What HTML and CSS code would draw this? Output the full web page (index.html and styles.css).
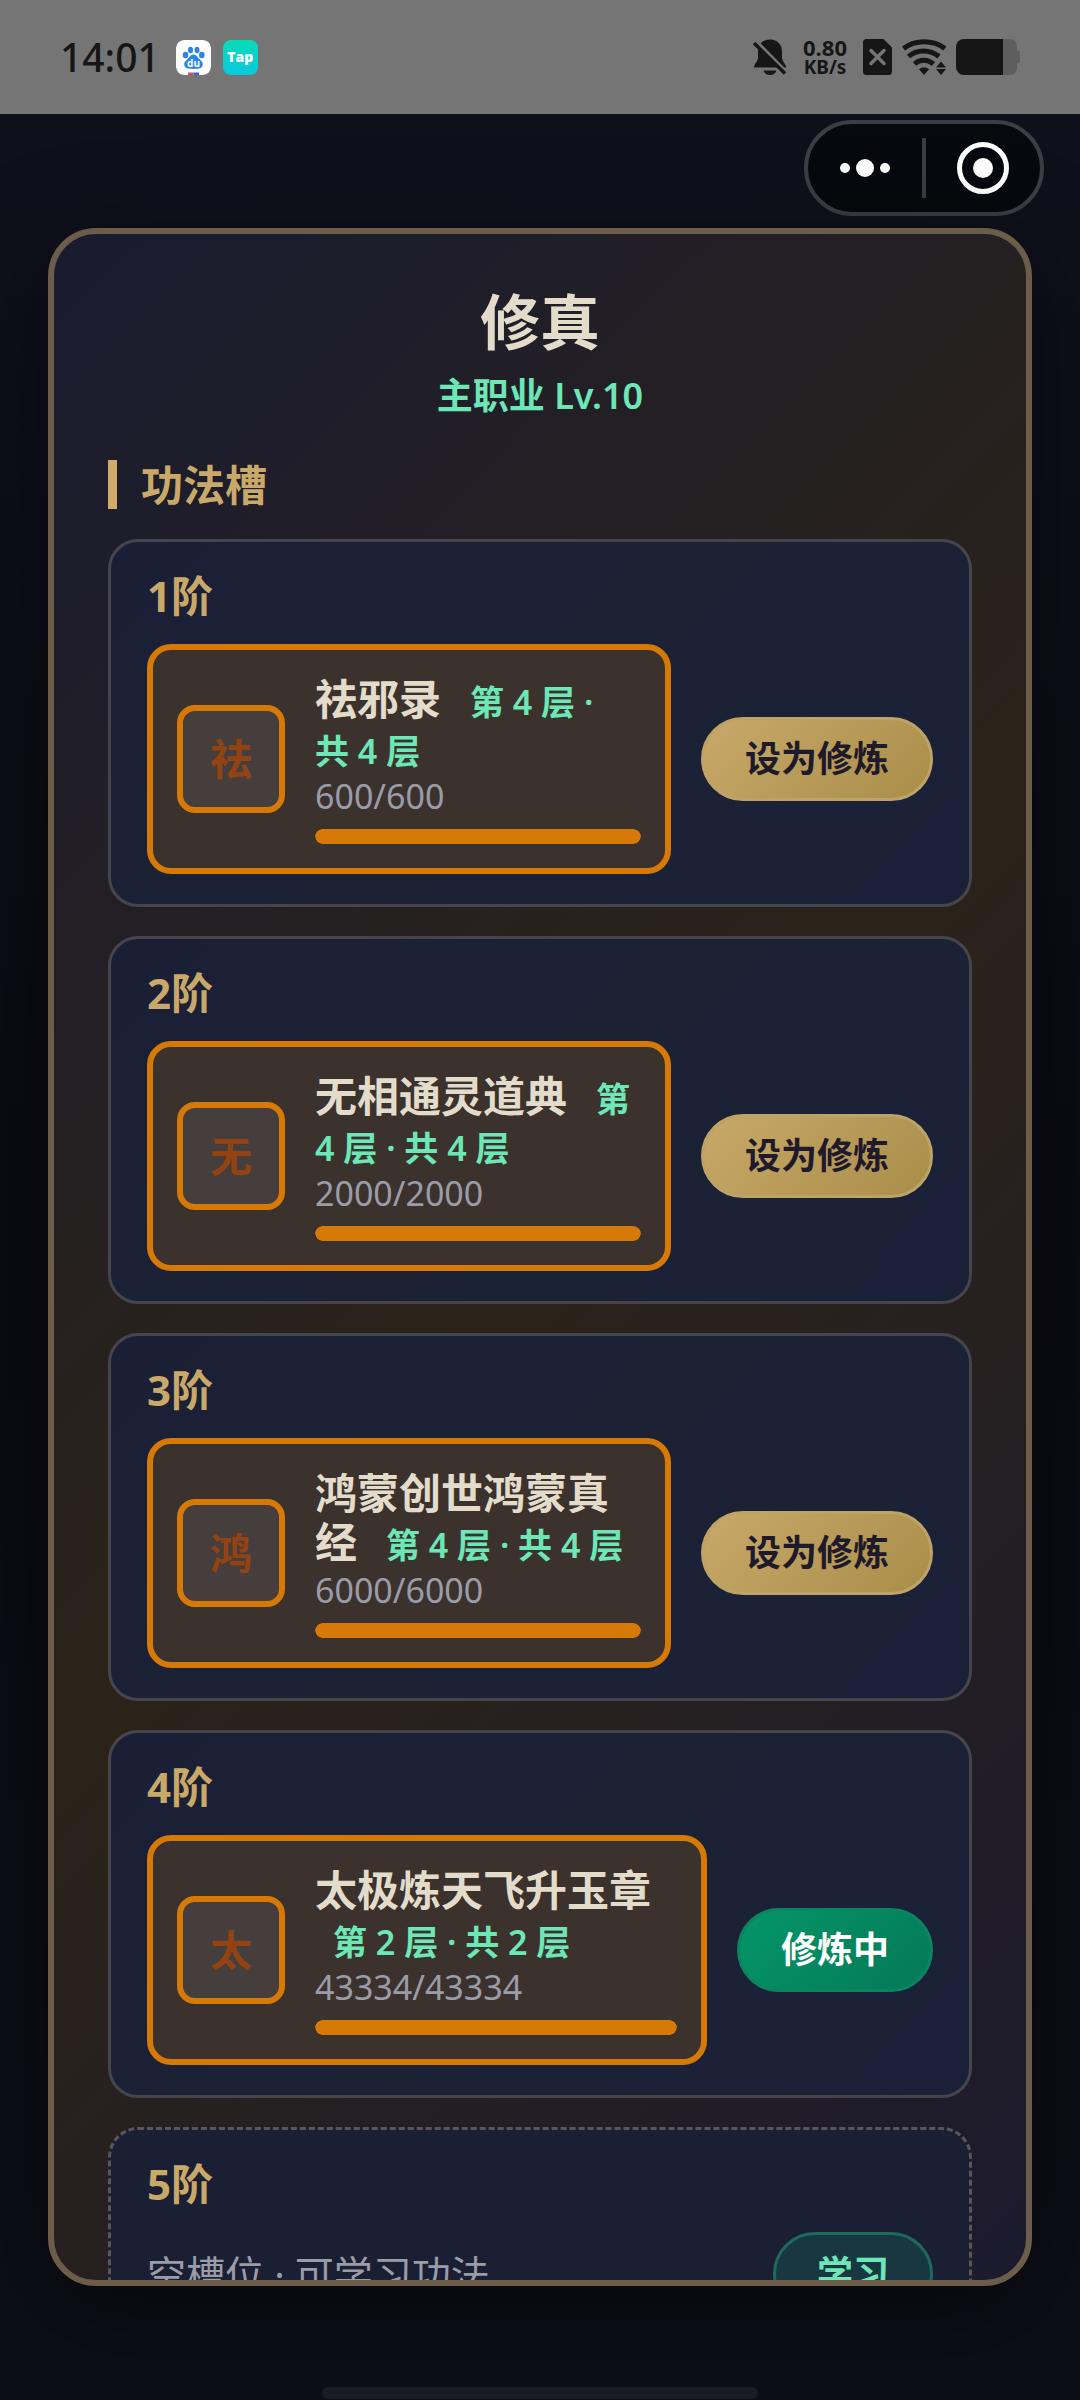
FILE: index.html
```html
<!DOCTYPE html>
<html lang="zh-CN">
<head>
<meta charset="utf-8">
<meta name="viewport" content="width=device-width, initial-scale=1">
<title>修真</title>
<link rel="stylesheet" href="styles.css">
</head>
<body>
<div class="status-bar">
  <div class="status-left">
    <span class="clock">14:01</span>
    <svg class="app-icon" viewBox="0 0 35 35" aria-hidden="true">
      <defs><clipPath id="app-clip"><rect width="35" height="35" rx="8"/></clipPath></defs>
      <g clip-path="url(#app-clip)">
        <rect width="35" height="35" fill="#fff"/>
        <g fill="#2b85e8">
          <ellipse cx="9.5" cy="15" rx="2.8" ry="3.3"/>
          <ellipse cx="14.5" cy="10" rx="2.5" ry="3.3"/>
          <ellipse cx="21" cy="10" rx="2.5" ry="3.3"/>
          <ellipse cx="25.8" cy="15" rx="2.8" ry="3.3"/>
          <path d="M17.5 14.5c3 0 4.2 3 6 4.800 1.800 1.700 3.800 3 3.200 6-.6 3-3.300 3.600-9.200 3.600s-8.600-.6-9.200-3.600c-.6-3 1.400-4.300 3.200-6 1.800-1.800 3-4.800 6-4.800z"/>
        </g>
        <text x="17.500" y="27" class="paw-text">du</text>
        <rect x="12" y="32.500" width="5.500" height="3" fill="#e0485a"/>
        <rect x="17.500" y="32.500" width="5.500" height="3" fill="#3b62d9"/>
      </g>
    </svg>
    <span class="app-icon tap-icon">Tap</span>
  </div>
  <div class="status-right">
    <svg class="bell" viewBox="0 0 34 36" aria-hidden="true">
      <path d="M17 0.500c7.500 0 12 5 12 12v6c0 4 4 6.500 4 10H1c0-3.500 4-6 4-10v-6c0-7 4.500-12 12-12z"/>
      <path d="M10.500 31.500h13c-1 3-3.500 4.500-6.500 4.500s-5.500-1.500-6.500-4.500z"/>
      <path d="M2 1.500L34 34" stroke="#757575" stroke-width="4"/>
      <path d="M1 4L32 34.500" stroke="#161616" stroke-width="3.500"/>
    </svg>
    <div class="net-speed"><span class="net-value">0.80</span><span class="net-unit">KB/s</span></div>
    <svg class="sim" viewBox="0 0 29 36" aria-hidden="true">
      <path d="M3.500 0h17L29 8.500v24a3.500 3.500 0 0 1-3.500 3.500h-22A3.500 3.500 0 0 1 0 32.500v-29A3.500 3.500 0 0 1 3.500 0z"/>
      <path d="M8 11.500l13 13M21 11.500l-13 13" stroke="#757575" stroke-width="3.500" stroke-linecap="round"/>
    </svg>
    <svg class="wifi" viewBox="0 0 45 36" aria-hidden="true">
      <g fill="none" stroke="#161616" stroke-width="5">
        <path d="M1.500 9.500C13 .5 31 .5 43 9.500"/>
        <path d="M6.500 17.500C15 10 28 10 37 17.500"/>
        <path d="M12.500 25c5.500-5 13-5 19 0"/>
      </g>
      <path d="M22 28.500c2 0 4 .5 5 1.800L22 36l-5-5.700c1-1.300 3-1.800 5-1.800z"/>
      <path d="M39 22.500l5 6H34zM39 36l5-6H34z"/>
    </svg>
    <svg class="battery" viewBox="0 0 64 36" aria-hidden="true">
      <path d="M47 0h7a7 7 0 0 1 7 7v4.500c2 0 3 1 3 2.500v8c0 1.500-1 2.500-3 2.500V29a7 7 0 0 1-7 7h-7z" fill="#5e5e5e"/>
      <path d="M8 0h39v36H8a8 8 0 0 1-8-8V8a8 8 0 0 1 8-8z"/>
    </svg>
  </div>
</div>

<header class="app-bar">
  <div class="capsule">
    <button class="capsule-button" type="button" aria-label="更多">
      <svg class="dots" viewBox="0 0 50 18" aria-hidden="true"><circle cx="5" cy="9" r="5"/><circle cx="25" cy="9" r="9"/><circle cx="45" cy="9" r="5"/></svg>
    </button>
    <span class="capsule-divider"></span>
    <button class="capsule-button" type="button" aria-label="关闭">
      <svg class="target" viewBox="0 0 52 52" aria-hidden="true"><circle cx="26" cy="26" r="23.500" fill="none" stroke="#fff" stroke-width="5"/><circle cx="26" cy="26" r="10"/></svg>
    </button>
  </div>
</header>

<main class="panel">
  <h1 class="title">修真</h1>
  <p class="subtitle">主职业 Lv.10</p>
  <h2 class="section-title">功法槽</h2>

  <div class="slots">
    <section class="slot">
      <h3 class="tier">1阶</h3>
      <div class="slot-row">
        <div class="skill">
          <div class="skill-icon">祛</div>
          <div class="skill-info">
            <p class="skill-name">祛邪录 <span class="layers">第 4 层 · 共&nbsp;4 层</span></p>
            <p class="skill-exp">600/600</p>
            <div class="bar"><div class="bar-fill" style="width: 100%"></div></div>
          </div>
        </div>
        <button class="action" type="button">设为修炼</button>
      </div>
    </section>

    <section class="slot">
      <h3 class="tier">2阶</h3>
      <div class="slot-row">
        <div class="skill">
          <div class="skill-icon">无</div>
          <div class="skill-info">
            <p class="skill-name">无相通灵道典 <span class="layers">第 4 层 · 共&nbsp;4 层</span></p>
            <p class="skill-exp">2000/2000</p>
            <div class="bar"><div class="bar-fill" style="width: 100%"></div></div>
          </div>
        </div>
        <button class="action" type="button">设为修炼</button>
      </div>
    </section>

    <section class="slot">
      <h3 class="tier">3阶</h3>
      <div class="slot-row">
        <div class="skill">
          <div class="skill-icon">鸿</div>
          <div class="skill-info">
            <p class="skill-name">鸿蒙创世鸿蒙真经 <span class="layers">第 4 层 · 共&nbsp;4 层</span></p>
            <p class="skill-exp">6000/6000</p>
            <div class="bar"><div class="bar-fill" style="width: 100%"></div></div>
          </div>
        </div>
        <button class="action" type="button">设为修炼</button>
      </div>
    </section>

    <section class="slot">
      <h3 class="tier">4阶</h3>
      <div class="slot-row">
        <div class="skill">
          <div class="skill-icon">太</div>
          <div class="skill-info">
            <p class="skill-name">太极炼天飞升玉章 <span class="layers">第 2 层 · 共&nbsp;2 层</span></p>
            <p class="skill-exp">43334/43334</p>
            <div class="bar"><div class="bar-fill" style="width: 100%"></div></div>
          </div>
        </div>
        <button class="action action-active" type="button">修炼中</button>
      </div>
    </section>

    <section class="slot slot-empty">
      <h3 class="tier">5阶</h3>
      <div class="slot-row">
        <p class="empty-text">空槽位 · 可学习功法</p>
        <button class="action action-learn" type="button">学习</button>
      </div>
    </section>
  </div>
</main>

<footer class="gesture-area"><span class="gesture-pill"></span></footer>
</body>
</html>
```
FILE: styles.css
```css
* {
  box-sizing: border-box;
}

body {
  margin: 0;
  height: 100vh;
  display: flex;
  flex-direction: column;
  overflow: hidden;
  background: linear-gradient(180deg, #11111d 0%, #0b0b13 50%, #0e0e18 100%);
  color: #e3dccb;
  font-family: "Noto Sans", "Noto Sans CJK SC", sans-serif;
}

h1, h2, h3, p {
  margin: 0;
}

button {
  font-family: inherit;
  margin: 0;
}

/* System status bar */
.status-bar {
  flex: none;
  height: 114px;
  padding: 0 60px;
  display: flex;
  align-items: center;
  justify-content: space-between;
  background: #757575;
  color: #161616;
  fill: #161616;
}

.status-left,
.status-right {
  display: flex;
  align-items: center;
}

.clock {
  font-size: 39px;
  line-height: 48px;
  font-weight: 500;
  margin-right: 16px;
}

.app-icon {
  width: 35px;
  height: 35px;
  border-radius: 8px;
}

.paw-text {
  font-family: "Open Sans", sans-serif;
  font-size: 10px;
  font-weight: 700;
  text-anchor: middle;
  fill: #fff;
}

.tap-icon {
  margin-left: 12px;
  background: linear-gradient(180deg, #08dcb4, #0bc8e0);
  color: #fff;
  font-family: "Open Sans", sans-serif;
  font-size: 14px;
  line-height: 33px;
  font-weight: 800;
  text-align: center;
}

.bell {
  width: 34px;
  height: 36px;
}

.net-speed {
  width: 48px;
  margin: 0 14px;
  display: flex;
  flex-direction: column;
  align-items: center;
  font-weight: 700;
}

.net-value {
  font-size: 22px;
  line-height: 20px;
}

.net-unit {
  font-size: 19px;
  line-height: 20px;
}

.sim {
  width: 29px;
  height: 36px;
}

.wifi {
  width: 45px;
  height: 36px;
  margin: 0 9px 0 10px;
}

.battery {
  width: 64px;
  height: 36px;
}

/* Mini-program capsule */
.app-bar {
  flex: none;
  height: 114px;
  padding: 6px 36px;
  display: flex;
  justify-content: flex-end;
  align-items: flex-start;
}

.capsule {
  width: 240px;
  height: 96px;
  display: flex;
  align-items: center;
  border: 4px solid #3d3d44;
  border-radius: 48px;
  background: #08090e;
}

.capsule-button {
  flex: 1;
  height: 100%;
  padding: 0;
  display: flex;
  align-items: center;
  justify-content: center;
  border: 0;
  background: none;
  fill: #fff;
}

.dots {
  width: 50px;
  height: 18px;
}

.target {
  width: 52px;
  height: 52px;
}

.capsule-divider {
  width: 4px;
  height: 60px;
  background: #3d3d44;
}

/* Main panel */
.panel {
  flex: 1;
  min-height: 0;
  margin: 0 48px;
  padding: 48px 54px;
  overflow-y: auto;
  scrollbar-width: none;
  border: 6px solid #6c5c4a;
  border-radius: 48px;
  background: linear-gradient(135deg, #1a1b30 0%, #2b2319 50%, #1c1a2e 100%);
  box-shadow: 0 24px 96px rgba(0, 0, 0, 0.5);
}

.title {
  font-size: 60px;
  line-height: 80px;
  font-weight: 700;
  text-align: center;
}

.subtitle {
  margin-top: 10px;
  font-size: 36px;
  line-height: 48px;
  font-weight: 600;
  text-align: center;
  color: #6ee7b7;
}

.section-title {
  margin: 40px 0 30px;
  padding-left: 24px;
  border-left: 9px solid #d0ab69;
  font-size: 42px;
  line-height: 49px;
  font-weight: 600;
  color: #c9a96a;
}

.slots {
  display: flex;
  flex-direction: column;
  gap: 29px;
}

.slot {
  padding: 30px 36px;
  border: 3px solid #45454b;
  border-radius: 30px;
  background: linear-gradient(135deg, #1a1f37, #1c2234 50%, #1a2038);
}

.slot-empty {
  border: 3px dashed #5a5654;
  background: #1b1f34;
}

.tier {
  margin-bottom: 24px;
  font-size: 42px;
  line-height: 48px;
  font-weight: 700;
  color: #c9a96a;
}

.slot-row {
  display: flex;
  align-items: center;
  justify-content: space-between;
  gap: 30px;
}

.skill {
  flex: 1;
  min-width: 0;
  padding: 24px;
  display: flex;
  align-items: center;
  gap: 30px;
  border: 6px solid #d77907;
  border-radius: 24px;
  background: #3b322e;
}

.skill-icon {
  flex: none;
  width: 108px;
  height: 108px;
  display: flex;
  align-items: center;
  justify-content: center;
  border: 6px solid #d77907;
  border-radius: 18px;
  background: #463e3c;
  color: #934311;
  font-size: 42px;
  line-height: 48px;
  font-weight: 700;
}

.skill-info {
  flex: 1;
  min-width: 0;
}

.skill-name {
  font-size: 42px;
  line-height: 49px;
  font-weight: 600;
}

.layers {
  margin-left: 18px;
  font-size: 34px;
  line-height: 34px;
  color: #6ee7b7;
}

.skill-exp {
  font-size: 34px;
  line-height: 48px;
  color: #9a9ca8;
}

.bar {
  height: 15px;
  margin-top: 9px;
  overflow: hidden;
  border-radius: 8px;
  background: #26221f;
}

.bar-fill {
  height: 100%;
  border-radius: 8px;
  background: #d77907;
}

.action {
  flex: none;
  padding: 15px 41px;
  border: 3px solid #bda365;
  border-radius: 42px;
  background: linear-gradient(135deg, #c9a96a, #a88d48) border-box;
  color: #1f1a2b;
  font-size: 36px;
  line-height: 48px;
  font-weight: 600;
}

.action-active {
  border-color: #0b8560;
  background: linear-gradient(135deg, #059669, #047857) border-box;
  color: #fff;
  font-weight: 700;
}

.action-learn {
  border-color: #1d6a5d;
  background: #193740;
  color: #6ee7b7;
  font-weight: 700;
}

.empty-text {
  font-size: 39px;
  line-height: 48px;
  color: #9a9ca8;
}

/* System gesture pill */
.gesture-area {
  flex: none;
  height: 114px;
  display: flex;
  align-items: flex-end;
  justify-content: center;
  padding-bottom: 1px;
}

.gesture-pill {
  width: 436px;
  height: 12px;
  border-radius: 6px;
  background: #1a1b25;
}
```
